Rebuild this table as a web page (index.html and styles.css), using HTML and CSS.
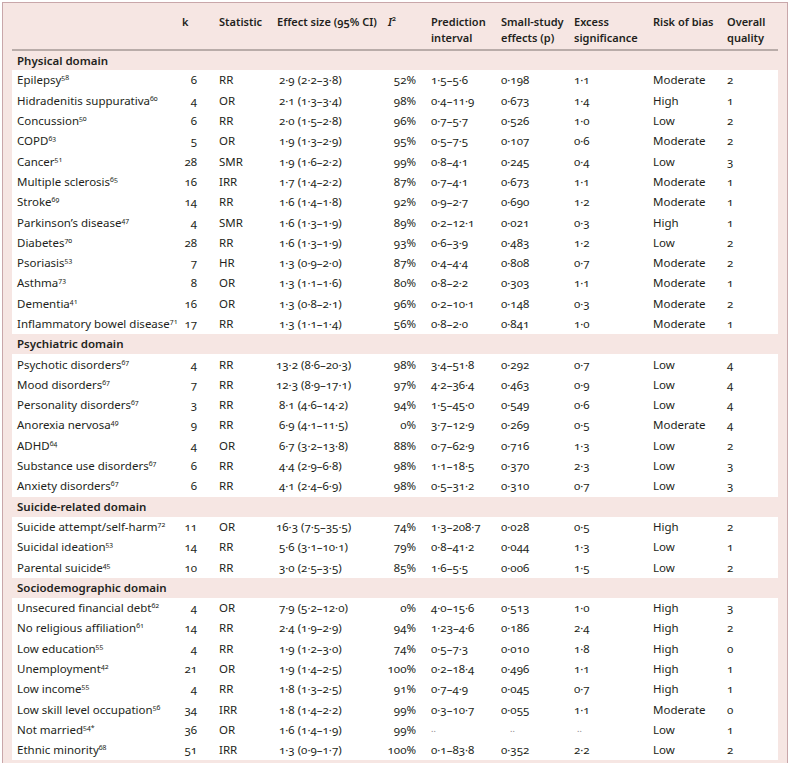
FILE: index.html
```html
<!DOCTYPE html>
<html lang="en">
<head>
<meta charset="utf-8">
<title>Table</title>
<link rel="stylesheet" href="styles.css">
</head>
<body>
<div class="frame">
<table class="tbl">
<colgroup>
<col class="c-name"><col class="c-k"><col class="c-stat"><col class="c-es"><col class="c-i2"><col class="c-pi"><col class="c-ss"><col class="c-ex"><col class="c-rb"><col class="c-oq">
</colgroup>
<thead>
<tr class="head">
<th></th>
<th class="hk">k</th>
<th>Statistic</th>
<th>Effect size (95% CI)</th>
<th class="hi2"><i>I</i><sup class="hsup">2</sup></th>
<th>Prediction<br>interval</th>
<th>Small-study<br>effects (p)</th>
<th>Excess<br>significance</th>
<th>Risk of bias</th>
<th>Overall<br>quality</th>
</tr>
</thead>
<tbody>
<tr class="dom"><td colspan="10">Physical domain</td></tr>
<tr><td>Epilepsy<sup>58</sup></td><td class="num">6</td><td>RR</td><td class="es p1">2·9 (2·2–3·8)</td><td class="pct">52%</td><td>1·5–5·6</td><td>0·198</td><td>1·1</td><td>Moderate</td><td>2</td></tr>
<tr><td>Hidradenitis suppurativa<sup>60</sup></td><td class="num">4</td><td>OR</td><td class="es p1">2·1 (1·3–3·4)</td><td class="pct">98%</td><td>0·4–11·9</td><td>0·673</td><td>1·4</td><td>High</td><td>1</td></tr>
<tr><td>Concussion<sup>50</sup></td><td class="num">6</td><td>RR</td><td class="es p1">2·0 (1·5–2·8)</td><td class="pct">96%</td><td>0·7–5·7</td><td>0·526</td><td>1·0</td><td>Low</td><td>2</td></tr>
<tr><td>COPD<sup>63</sup></td><td class="num">5</td><td>OR</td><td class="es p1">1·9 (1·3–2·9)</td><td class="pct">95%</td><td>0·5–7·5</td><td>0·107</td><td>0·6</td><td>Moderate</td><td>2</td></tr>
<tr><td>Cancer<sup>51</sup></td><td class="num">28</td><td>SMR</td><td class="es p1">1·9 (1·6–2·2)</td><td class="pct">99%</td><td>0·8–4·1</td><td>0·245</td><td>0·4</td><td>Low</td><td>3</td></tr>
<tr><td>Multiple sclerosis<sup>65</sup></td><td class="num">16</td><td>IRR</td><td class="es p1">1·7 (1·4–2·2)</td><td class="pct">87%</td><td>0·7–4·1</td><td>0·673</td><td>1·1</td><td>Moderate</td><td>1</td></tr>
<tr><td>Stroke<sup>69</sup></td><td class="num">14</td><td>RR</td><td class="es p1">1·6 (1·4–1·8)</td><td class="pct">92%</td><td>0·9–2·7</td><td>0·690</td><td>1·2</td><td>Moderate</td><td>1</td></tr>
<tr><td>Parkinson’s disease<sup>47</sup></td><td class="num">4</td><td>SMR</td><td class="es p1">1·6 (1·3–1·9)</td><td class="pct">89%</td><td>0·2–12·1</td><td>0·021</td><td>0·3</td><td>High</td><td>1</td></tr>
<tr><td>Diabetes<sup>70</sup></td><td class="num">28</td><td>RR</td><td class="es p1">1·6 (1·3–1·9)</td><td class="pct">93%</td><td>0·6–3·9</td><td>0·483</td><td>1·2</td><td>Low</td><td>2</td></tr>
<tr><td>Psoriasis<sup>53</sup></td><td class="num">7</td><td>HR</td><td class="es p1">1·3 (0·9–2·0)</td><td class="pct">87%</td><td>0·4–4·4</td><td>0·808</td><td>0·7</td><td>Moderate</td><td>2</td></tr>
<tr><td>Asthma<sup>73</sup></td><td class="num">8</td><td>OR</td><td class="es p1">1·3 (1·1–1·6)</td><td class="pct">80%</td><td>0·8–2·2</td><td>0·303</td><td>1·1</td><td>Moderate</td><td>1</td></tr>
<tr><td>Dementia<sup>41</sup></td><td class="num">16</td><td>OR</td><td class="es p1">1·3 (0·8–2·1)</td><td class="pct">96%</td><td>0·2–10·1</td><td>0·148</td><td>0·3</td><td>Moderate</td><td>2</td></tr>
<tr><td>Inflammatory bowel disease<sup>71</sup></td><td class="num">17</td><td>RR</td><td class="es p1">1·3 (1·1–1·4)</td><td class="pct">56%</td><td>0·8–2·0</td><td>0·841</td><td>1·0</td><td>Moderate</td><td>1</td></tr>
<tr class="dom"><td colspan="10">Psychiatric domain</td></tr>
<tr><td>Psychotic disorders<sup>67</sup></td><td class="num">4</td><td>RR</td><td class="es">13·2 (8·6–20·3)</td><td class="pct">98%</td><td>3·4–51·8</td><td>0·292</td><td>0·7</td><td>Low</td><td>4</td></tr>
<tr><td>Mood disorders<sup>67</sup></td><td class="num">7</td><td>RR</td><td class="es">12·3 (8·9–17·1)</td><td class="pct">97%</td><td>4·2–36·4</td><td>0·463</td><td>0·9</td><td>Low</td><td>4</td></tr>
<tr><td>Personality disorders<sup>67</sup></td><td class="num">3</td><td>RR</td><td class="es p1">8·1 (4·6–14·2)</td><td class="pct">94%</td><td>1·5–45·0</td><td>0·549</td><td>0·6</td><td>Low</td><td>4</td></tr>
<tr><td>Anorexia nervosa<sup>49</sup></td><td class="num">9</td><td>RR</td><td class="es p1">6·9 (4·1–11·5)</td><td class="pct">0%</td><td>3·7–12·9</td><td>0·269</td><td>0·5</td><td>Moderate</td><td>4</td></tr>
<tr><td>ADHD<sup>64</sup></td><td class="num">4</td><td>OR</td><td class="es p1">6·7 (3·2–13·8)</td><td class="pct">88%</td><td>0·7–62·9</td><td>0·716</td><td>1·3</td><td>Low</td><td>2</td></tr>
<tr><td>Substance use disorders<sup>67</sup></td><td class="num">6</td><td>RR</td><td class="es p1">4·4 (2·9–6·8)</td><td class="pct">98%</td><td>1·1–18·5</td><td>0·370</td><td>2·3</td><td>Low</td><td>3</td></tr>
<tr><td>Anxiety disorders<sup>67</sup></td><td class="num">6</td><td>RR</td><td class="es p1">4·1 (2·4–6·9)</td><td class="pct">98%</td><td>0·5–31·2</td><td>0·310</td><td>0·7</td><td>Low</td><td>3</td></tr>
<tr class="dom"><td colspan="10">Suicide-related domain</td></tr>
<tr><td>Suicide attempt/self-harm<sup>72</sup></td><td class="num">11</td><td>OR</td><td class="es">16·3 (7·5–35·5)</td><td class="pct">74%</td><td>1·3–208·7</td><td>0·028</td><td>0·5</td><td>High</td><td>2</td></tr>
<tr><td>Suicidal ideation<sup>53</sup></td><td class="num">14</td><td>RR</td><td class="es p1">5·6 (3·1–10·1)</td><td class="pct">79%</td><td>0·8–41·2</td><td>0·044</td><td>1·3</td><td>Low</td><td>1</td></tr>
<tr><td>Parental suicide<sup>45</sup></td><td class="num">10</td><td>RR</td><td class="es p1">3·0 (2·5–3·5)</td><td class="pct">85%</td><td>1·6–5·5</td><td>0·006</td><td>1·5</td><td>Low</td><td>2</td></tr>
<tr class="dom"><td colspan="10">Sociodemographic domain</td></tr>
<tr><td>Unsecured financial debt<sup>62</sup></td><td class="num">4</td><td>OR</td><td class="es p1">7·9 (5·2–12·0)</td><td class="pct">0%</td><td>4·0–15·6</td><td>0·513</td><td>1·0</td><td>High</td><td>3</td></tr>
<tr><td>No religious affiliation<sup>61</sup></td><td class="num">14</td><td>RR</td><td class="es p1">2·4 (1·9–2·9)</td><td class="pct">94%</td><td>1·23–4·6</td><td>0·186</td><td>2·4</td><td>High</td><td>2</td></tr>
<tr><td>Low education<sup>55</sup></td><td class="num">4</td><td>RR</td><td class="es p1">1·9 (1·2–3·0)</td><td class="pct">74%</td><td>0·5–7·3</td><td>0·010</td><td>1·8</td><td>High</td><td>0</td></tr>
<tr><td>Unemployment<sup>42</sup></td><td class="num">21</td><td>OR</td><td class="es p1">1·9 (1·4–2·5)</td><td class="pct">100%</td><td>0·2–18·4</td><td>0·496</td><td>1·1</td><td>High</td><td>1</td></tr>
<tr><td>Low income<sup>55</sup></td><td class="num">4</td><td>RR</td><td class="es p1">1·8 (1·3–2·5)</td><td class="pct">91%</td><td>0·7–4·9</td><td>0·045</td><td>0·7</td><td>High</td><td>1</td></tr>
<tr><td>Low skill level occupation<sup>56</sup></td><td class="num">34</td><td>IRR</td><td class="es p1">1·8 (1·4–2·2)</td><td class="pct">99%</td><td>0·3–10·7</td><td>0·055</td><td>1·1</td><td>Moderate</td><td>0</td></tr>
<tr><td>Not married<sup>54*</sup></td><td class="num">36</td><td>OR</td><td class="es p1">1·6 (1·4–1·9)</td><td class="pct">99%</td><td class="dots"><span class="dd">..</span></td><td class="dots d-ss"><span class="dd">..</span></td><td class="dots d-ex"><span class="dd">..</span></td><td>Low</td><td>1</td></tr>
<tr><td>Ethnic minority<sup>68</sup></td><td class="num">51</td><td>IRR</td><td class="es p1">1·3 (0·9–1·7)</td><td class="pct">100%</td><td>0·1–83·8</td><td>0·352</td><td>2·2</td><td>Low</td><td>2</td></tr>
</tbody>
</table>
</div>
</body>
</html>
```
FILE: styles.css
```css
html, body {
  margin: 0;
  padding: 0;
  background: #ffffff;
}

body {
  font-family: "Noto Sans", "Open Sans", "Liberation Sans", sans-serif;
  color: #231f20;
  font-size: 11.5px;
  font-variant-numeric: oldstyle-nums tabular-nums;
}

.frame {
  margin: 2px 0 0 2px;
  width: 786px;
  height: 780px;
  border: 1px solid #c9a7aa;
  border-bottom: none;
  background: #f6e6e3;
  padding: 0 0 0 9px;
  box-sizing: border-box;
}

.tbl {
  table-layout: fixed;
  width: 766px;
  border-collapse: collapse;
  border-spacing: 0;
}

.c-name { width: 148px; }
.c-k { width: 54px; }
.c-stat { width: 58px; }
.c-es { width: 106px; }
.c-i2 { width: 48px; }
.c-pi { width: 70px; }
.c-ss { width: 73px; }
.c-ex { width: 79px; }
.c-rb { width: 74px; }
.c-oq { width: 56px; }

.head th {
  text-align: left;
  vertical-align: top;
  font-weight: 600;
  font-size: 11px;
  line-height: 16px;
  padding: 11px 0 3px 5px;
  border-bottom: 2px solid #b9aca9;
  white-space: nowrap;
}

.head th.hk {
  padding-left: 22px;
}

.head th.hi2 {
  padding-left: 10px;
}

.hsup {
  font-size: 7px;
  line-height: 0;
  vertical-align: 5px;
}

tbody tr {
  height: 20.3px;
}

tbody td {
  padding: 0 0 0 5px;
  line-height: 14px;
  white-space: nowrap;
  background: #ffffff;
  vertical-align: middle;
}

tbody tr.dom td {
  background: #f6e6e3;
  font-weight: 600;
  font-size: 11.5px;
}

td.num {
  text-align: right;
  padding-right: 17px;
}

td.pct {
  text-align: right;
  padding-right: 10px;
}

td.es {
  padding-left: 4px;
}

td.es.p1 {
  padding-left: 7px;
}

td.dots {
  color: #8a8485;
}

td.d-ss {
  padding-left: 14px;
}

td.d-ex {
  padding-left: 8px;
}

.dd {
  vertical-align: 3px;
  font-size: 9px;
}

sup {
  font-size: 7px;
  line-height: 0;
  vertical-align: 4px;
}
```
